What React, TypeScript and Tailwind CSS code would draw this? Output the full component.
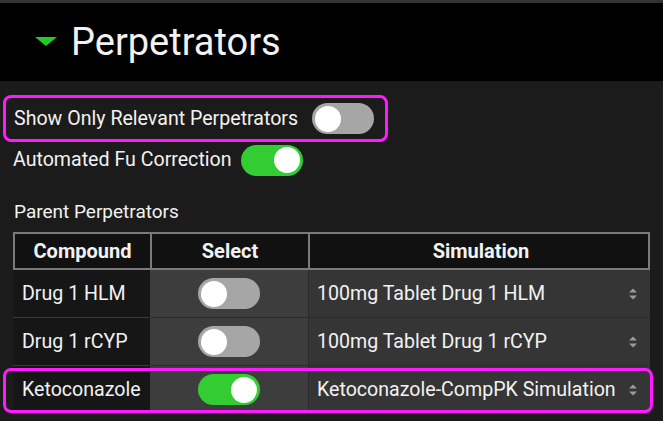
import React from 'react';

const Toggle = ({ on }: { on: boolean }) => (
    <div
        className={
            on
                ? 'w-[62px] h-[31px] rounded-full bg-[#33cc33] flex items-center justify-end px-[3px] shrink-0'
                : 'w-[62px] h-[31px] rounded-full bg-[#a6a6a6] flex items-center justify-start px-[3px] shrink-0'
        }
    >
        <div className="w-[26px] h-[26px] rounded-full bg-white"></div>
    </div>
);

const Arrows = () => (
    <svg width="10" height="16" viewBox="0 0 10 16" className="shrink-0">
        <path d="M1 6.5 L5 2.5 L9 6.5 Z" fill="#9a9a9a" />
        <path d="M1 9.5 L5 13.5 L9 9.5 Z" fill="#9a9a9a" />
    </svg>
);

const rows = [
    { name: 'Drug 1 HLM', on: false, sim: '100mg Tablet Drug 1 HLM' },
    { name: 'Drug 1 rCYP', on: false, sim: '100mg Tablet Drug 1 rCYP' },
    { name: 'Ketoconazole', on: true, sim: 'Ketoconazole-CompPK Simulation' },
];

const App = () => {
    return (
        <div className="w-[663px] h-[421px] bg-[#1b1b1b] overflow-hidden text-[#f2f2f2] font-['Roboto',sans-serif]">
            <div className="h-[3px] bg-[#333333]"></div>

            <div className="h-[78px] bg-black flex items-center pl-[35px]">
                <svg width="22" height="9" viewBox="0 0 22 9" className="mt-[-1px]">
                    <path d="M0 0 L22 0 L11 9 Z" fill="#22cc22" />
                </svg>
                <span className="ml-[14px] text-[38px] leading-none">Perpetrators</span>
            </div>

            <div className="pt-[14px]">
                <div className="ml-[3px] w-[385px] h-[47px] border-[3px] border-[#ff1aff] rounded-[8px] flex items-center pl-[8px] pr-[11px]">
                    <span className="text-[19.6px]">Show Only Relevant Perpetrators</span>
                    <div className="ml-auto">
                        <Toggle on={false} />
                    </div>
                </div>

                <div className="flex items-center pl-[13px] mt-[2px] h-[32px]">
                    <span className="text-[19.6px]">Automated Fu Correction</span>
                    <div className="ml-[9px]">
                        <Toggle on={true} />
                    </div>
                </div>

                <div className="pl-[14px] mt-[26px] text-[19px] leading-none">Parent Perpetrators</div>

                <div className="ml-[13px] mt-[11px] w-[637px]">
                    <div className="grid grid-cols-[137px_158px_342px] h-[38px] bg-[#111111] border-2 border-[#7a7a7a] text-[20px] font-bold">
                        <div className="flex items-center justify-center border-r-2 border-[#7a7a7a]">Compound</div>
                        <div className="flex items-center justify-center border-r-2 border-[#7a7a7a]">Select</div>
                        <div className="flex items-center justify-center">Simulation</div>
                    </div>

                    {rows.map((r, i) => (
                        <div key={r.name} className="relative grid grid-cols-[137px_158px_342px] h-[48px] text-[19.6px]">
                            <div className="flex items-center pl-[9px] bg-[#161616] border-b border-[#3a3a3a]">{r.name}</div>
                            <div className="flex items-center justify-center bg-[#3d3d3d] border-b border-[#2a2a2a]">
                                <Toggle on={r.on} />
                            </div>
                            <div className="flex items-center pl-[8px] pr-[12px] bg-[#353535] border-b border-l border-[#2a2a2a]">
                                <span>{r.sim}</span>
                                <div className="ml-auto">
                                    <Arrows />
                                </div>
                            </div>
                            {i === 2 && (
                                <div className="absolute left-[-10px] right-[-3px] top-[2px] bottom-[1px] border-[3px] border-[#ff1aff] rounded-[8px] pointer-events-none"></div>
                            )}
                        </div>
                    ))}
                </div>
            </div>
        </div>
    );
};

export default App;
